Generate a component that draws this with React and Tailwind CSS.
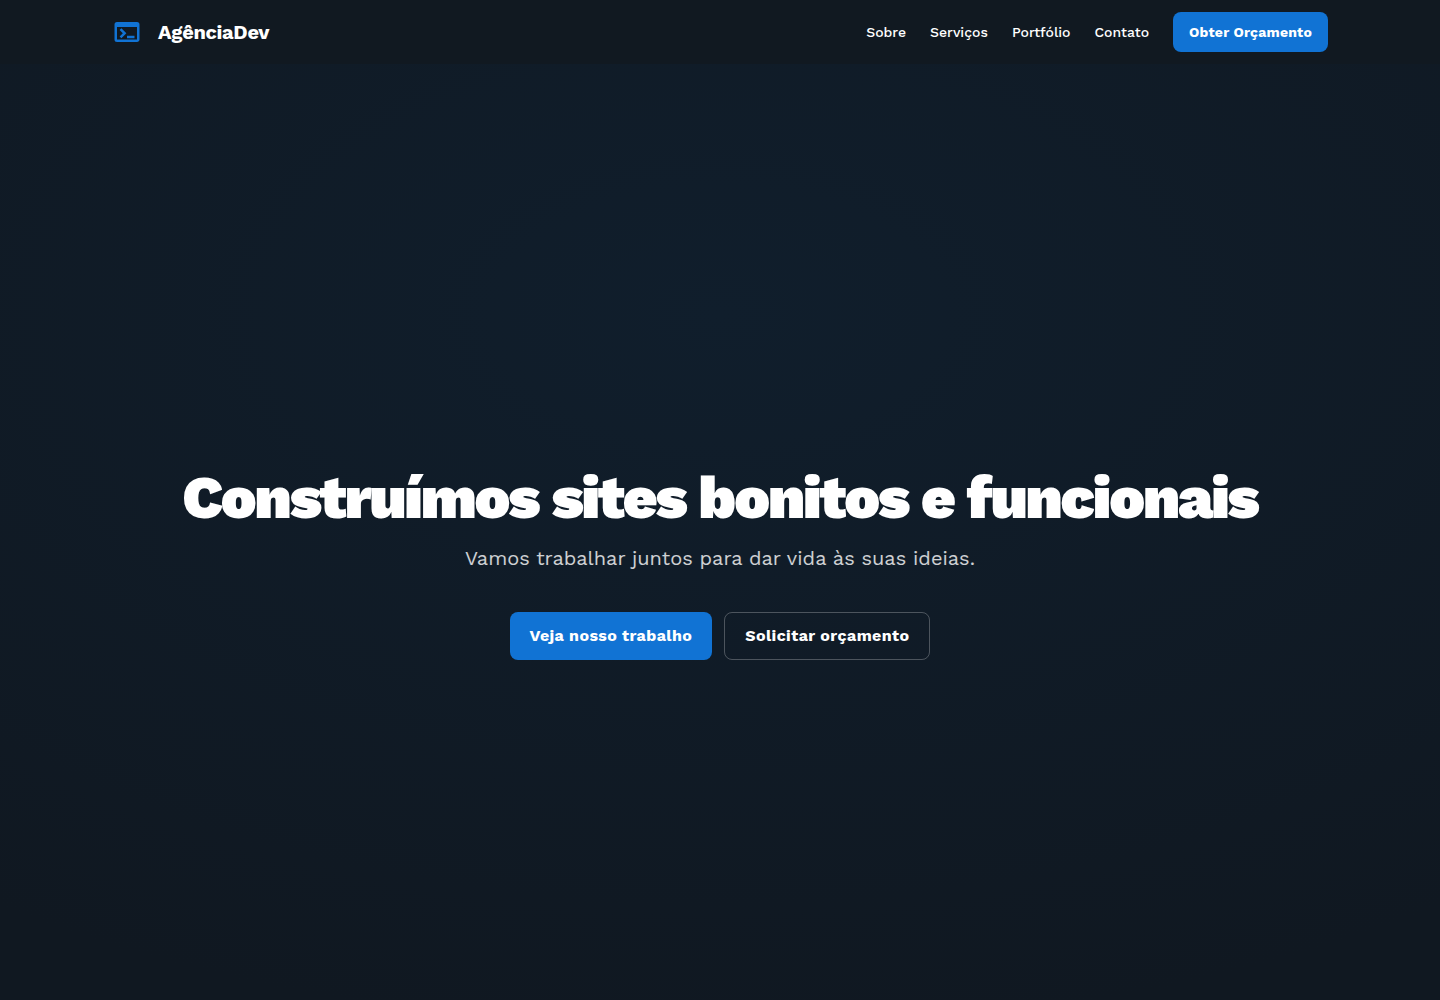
import { MdTerminal } from "react-icons/md";

const navLinks = [
  { label: "Sobre", href: "#sobre" },
  { label: "Serviços", href: "#servicos" },
  { label: "Portfólio", href: "#portfolio" },
  { label: "Contato", href: "#contato" },
];

function Header() {
  return (
    <header className="sticky top-0 z-50 bg-[#111921]">
      <div className="max-w-7xl mx-auto px-4 sm:px-6 lg:px-8 h-16 flex items-center justify-between">
        <a href="#" className="flex items-center gap-4">
          <MdTerminal className="text-3xl text-[#1173d4]" aria-hidden="true" />
          <span className="text-xl font-bold tracking-[-0.015em]">AgênciaDev</span>
        </a>

        <nav className="flex items-center gap-6">
          {navLinks.map((link) => (
            <a
              key={link.href}
              href={link.href}
              className="hidden md:block text-sm font-medium hover:text-[#1173d4] transition-colors"
            >
              {link.label}
            </a>
          ))}
          <button
            type="button"
            className="h-10 px-4 rounded-lg bg-[#1173d4] text-sm font-bold tracking-[0.015em] hover:bg-[#1173d4]/90 transition-colors"
          >
            Obter Orçamento
          </button>
        </nav>
      </div>
    </header>
  );
}

function Hero() {
  return (
    <section className="min-h-screen flex items-center justify-center px-4 text-center bg-[radial-gradient(ellipse_88%_72%_at_50%_25%,#101e2c_0%,#101821_100%)]">
      <div className="flex flex-col items-center">
        <h1 className="text-6xl leading-none font-black tracking-[-0.035em]">
          Construímos sites bonitos e funcionais
        </h1>
        <p className="mt-4 text-xl text-white/80">
          Vamos trabalhar juntos para dar vida às suas ideias.
        </p>
        <div className="mt-10 flex flex-wrap justify-center gap-3">
          <button
            type="button"
            className="h-12 px-5 rounded-lg bg-[#1173d4] text-base font-bold tracking-wide hover:bg-[#1173d4]/90 transition-colors"
          >
            Veja nosso trabalho
          </button>
          <button
            type="button"
            className="h-12 px-5 rounded-lg border border-white/25 text-base font-bold tracking-wide hover:bg-white/5 transition-colors"
          >
            Solicitar orçamento
          </button>
        </div>
      </div>
    </section>
  );
}

function App() {
  return (
    <div className="min-h-screen bg-[#101821] text-white font-['Work_Sans','Inter',sans-serif]">
      <Header />
      <main>
        <Hero />
      </main>
    </div>
  );
}

export default App;
